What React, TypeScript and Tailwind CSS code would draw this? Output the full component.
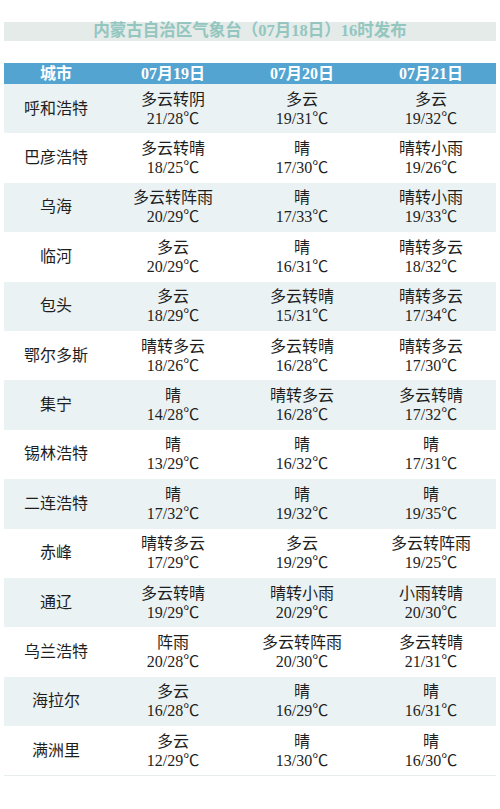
import React from 'react';

type Day = { w: string; t: string };
type Row = { city: string; days: Day[] };

const rows: Row[] = [
  { city: '呼和浩特', days: [{ w: '多云转阴', t: '21/28℃' }, { w: '多云', t: '19/31℃' }, { w: '多云', t: '19/32℃' }] },
  { city: '巴彦浩特', days: [{ w: '多云转晴', t: '18/25℃' }, { w: '晴', t: '17/30℃' }, { w: '晴转小雨', t: '19/26℃' }] },
  { city: '乌海', days: [{ w: '多云转阵雨', t: '20/29℃' }, { w: '晴', t: '17/33℃' }, { w: '晴转小雨', t: '19/33℃' }] },
  { city: '临河', days: [{ w: '多云', t: '20/29℃' }, { w: '晴', t: '16/31℃' }, { w: '晴转多云', t: '18/32℃' }] },
  { city: '包头', days: [{ w: '多云', t: '18/29℃' }, { w: '多云转晴', t: '15/31℃' }, { w: '晴转多云', t: '17/34℃' }] },
  { city: '鄂尔多斯', days: [{ w: '晴转多云', t: '18/26℃' }, { w: '多云转晴', t: '16/28℃' }, { w: '晴转多云', t: '17/30℃' }] },
  { city: '集宁', days: [{ w: '晴', t: '14/28℃' }, { w: '晴转多云', t: '16/28℃' }, { w: '多云转晴', t: '17/32℃' }] },
  { city: '锡林浩特', days: [{ w: '晴', t: '13/29℃' }, { w: '晴', t: '16/32℃' }, { w: '晴', t: '17/31℃' }] },
  { city: '二连浩特', days: [{ w: '晴', t: '17/32℃' }, { w: '晴', t: '19/32℃' }, { w: '晴', t: '19/35℃' }] },
  { city: '赤峰', days: [{ w: '晴转多云', t: '17/29℃' }, { w: '多云', t: '19/29℃' }, { w: '多云转阵雨', t: '19/25℃' }] },
  { city: '通辽', days: [{ w: '多云转晴', t: '19/29℃' }, { w: '晴转小雨', t: '20/29℃' }, { w: '小雨转晴', t: '20/30℃' }] },
  { city: '乌兰浩特', days: [{ w: '阵雨', t: '20/28℃' }, { w: '多云转阵雨', t: '20/30℃' }, { w: '多云转晴', t: '21/31℃' }] },
  { city: '海拉尔', days: [{ w: '多云', t: '16/28℃' }, { w: '晴', t: '16/29℃' }, { w: '晴', t: '16/31℃' }] },
  { city: '满洲里', days: [{ w: '多云', t: '12/29℃' }, { w: '晴', t: '13/30℃' }, { w: '晴', t: '16/30℃' }] },
];

const font = { fontFamily: '"Liberation Serif", "Noto Sans CJK SC", serif' };

const App: React.FC = () => {
  return (
    <div className="w-[500px] h-[809px] bg-white px-1 pt-[22px]" style={font}>
      {/* title bar */}
      <div className="h-[19px] bg-[#e4ebe9] flex items-center justify-center text-[16.5px] font-bold text-[#93c6bf] leading-none">
        内蒙古自治区气象台（07月18日）16时发布
      </div>

      <div className="mt-[22px] border-b border-[#e8eef0]">
        {/* header */}
        <div className="grid grid-cols-[104px_130px_128px_130px] h-[21px] bg-[#54a4d2] text-white font-bold text-[16px] leading-none">
          <div className="flex items-center justify-center">城市</div>
          <div className="flex items-center justify-center">07月19日</div>
          <div className="flex items-center justify-center">07月20日</div>
          <div className="flex items-center justify-center">07月21日</div>
        </div>

        {rows.map((r, i) => (
          <div
            key={r.city}
            className={`grid grid-cols-[104px_130px_128px_130px] h-[49.4px] text-[16px] text-[#1e1e1e] ${i % 2 === 0 ? 'bg-[#eaf2f4]' : 'bg-white'}`}
          >
            <div className="flex items-center justify-center">{r.city}</div>
            {r.days.map((d, j) => (
              <div key={j} className="flex flex-col items-center justify-center leading-[19px]">
                <span>{d.w}</span>
                <span>{d.t}</span>
              </div>
            ))}
          </div>
        ))}
      </div>
    </div>
  );
};

export default App;
